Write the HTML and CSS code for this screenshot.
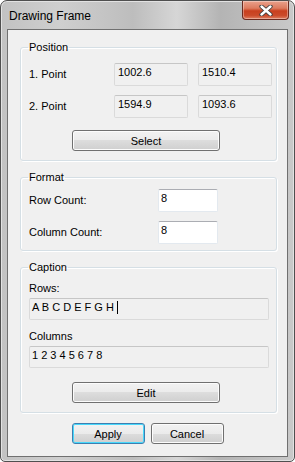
FILE: index.html
```html
<!DOCTYPE html>
<html lang="en">
<head>
    <meta charset="UTF-8">
    <meta name="viewport" content="width=device-width, initial-scale=1.0">
    <title>Drawing Frame</title>
    <link rel="stylesheet" href="styles.css">
</head>
<body>
    <div class="window">
        <!-- 标题栏 -->
        <div class="titlebar">
            <span class="title">Drawing Frame</span>
            <button class="close" aria-label="Close">
                <svg width="14" height="11" viewBox="0 0 14 11">
                    <path d="M2.5 1.5 L11.5 9.5 M11.5 1.5 L2.5 9.5" stroke="#3b3b3b" stroke-width="4.2" stroke-linecap="round" fill="none"/>
                    <path d="M2.5 1.5 L11.5 9.5 M11.5 1.5 L2.5 9.5" stroke="#ffffff" stroke-width="2.4" stroke-linecap="round" fill="none"/>
                </svg>
            </button>
        </div>

        <div class="client">
            <fieldset class="group group-position">
                <legend>Position</legend>
                <div class="point-row">
                    <span class="label">1. Point</span>
                    <div class="field">1002.6</div>
                    <div class="field">1510.4</div>
                </div>
                <div class="point-row">
                    <span class="label">2. Point</span>
                    <div class="field">1594.9</div>
                    <div class="field">1093.6</div>
                </div>
                <button class="btn btn-wide">Select</button>
            </fieldset>

            <fieldset class="group group-format">
                <legend>Format</legend>
                <div class="count-row">
                    <span class="label">Row Count:</span>
                    <div class="field field-edit">8</div>
                </div>
                <div class="count-row">
                    <span class="label">Column Count:</span>
                    <div class="field field-edit">8</div>
                </div>
            </fieldset>

            <fieldset class="group group-caption">
                <legend>Caption</legend>
                <div class="caption-label">Rows:</div>
                <div class="field field-long">A B C D E F G H <span class="caret"></span></div>
                <div class="caption-label caption-label-second">Columns</div>
                <div class="field field-long">1 2 3 4 5 6 7 8</div>
                <button class="btn btn-wide btn-edit">Edit</button>
            </fieldset>

            <!-- 对话框按钮 -->
            <div class="dialog-buttons">
                <button class="btn btn-default">Apply</button>
                <button class="btn">Cancel</button>
            </div>
        </div>
    </div>
</body>
</html>
```

FILE: styles.css
```css
body {
    margin: 0;
    font-family: 'Liberation Sans', Arial, sans-serif;
    font-size: 11px;
    color: #000;
    background: #fff;
}

.window {
    box-sizing: border-box;
    width: 295px;
    height: 462px;
    display: flex;
    flex-direction: column;
    border: 1px solid #4f4f4f;
    border-radius: 7px 7px 5px 5px;
    background: linear-gradient(to right, #c2c2c2 0%, #cfcfcf 20%, #bdbdbd 45%, #d6d6d6 60%, #b4b4b4 75%, #c9c9c9 100%);
    box-shadow: inset 0 0 0 1px #e2e2e2;
    overflow: hidden;
}

/* 标题栏 */
.titlebar {
    height: 28px;
    flex: none;
    display: flex;
    align-items: flex-start;
    padding-left: 8px;
}

.title {
    font-size: 12px;
    line-height: 14px;
    margin-top: 8px;
    color: #000;
}

.close {
    margin-left: auto;
    margin-right: 5px;
    width: 47px;
    height: 19px;
    padding: 0;
    display: flex;
    align-items: center;
    justify-content: center;
    border: 1px solid #6b2b20;
    border-top: none;
    border-radius: 0 0 4px 4px;
    background: linear-gradient(#e9a18c 0%, #dd7b5f 40%, #c9401f 55%, #cb4a2a 80%, #df8062 100%);
    box-shadow: inset 0 0 0 1px rgba(255, 255, 255, 0.35);
}

.close svg {
    display: block;
}

/* 客户区 */
.client {
    flex: 1;
    margin: 0 6px 4px;
    padding-top: 11px;
    border: 1px solid #707070;
    background: #f0f0f0;
}

.group {
    margin: 0 10px 0 12px;
    padding: 9px 8px 9px 8px;
    border: 1px solid #d5dfe5;
    border-radius: 3px;
    box-shadow: inset 1px 1px 0 #fff, 1px 1px 0 #fff;
    min-inline-size: 0;
}

.group legend {
    padding: 0 1px;
    margin-left: -1px;
    line-height: 13px;
    font-size: 11px;
}

.group-format {
    margin-top: 10px;
    padding-top: 5px;
    padding-bottom: 6px;
}

.group-caption {
    margin-top: 10px;
    padding-top: 8px;
}

.label {
    line-height: 13px;
    flex: none;
}

.field {
    box-sizing: border-box;
    flex: none;
    height: 23px;
    padding: 2px 3px 0;
    line-height: 13px;
    border: 1px solid #dadada;
    border-top-color: #c6c6c6;
    border-radius: 2px;
    background: #f0f0f0;
    white-space: nowrap;
}

.field-edit {
    width: 60px;
    padding-left: 2px;
    background: #fff;
    border-color: #e3e9ef;
    border-top-color: #abadb3;
}

.field-long {
    width: 240px;
    height: 22px;
    padding-left: 2px;
    margin-top: 3px;
}

.caret {
    display: inline-block;
    width: 1px;
    height: 13px;
    background: #000;
    vertical-align: top;
}

.point-row {
    display: flex;
    align-items: center;
    gap: 10px;
}

.point-row + .point-row {
    margin-top: 9px;
}

.point-row .label {
    width: 75px;
}

.point-row .field {
    width: 74px;
}

.count-row {
    display: flex;
    align-items: center;
}

.count-row + .count-row {
    margin-top: 9px;
}

.count-row .label {
    width: 129px;
}

.caption-label {
    line-height: 13px;
}

.caption-label-second {
    margin-top: 10px;
}

/* 按钮 */
.btn {
    box-sizing: border-box;
    height: 21px;
    padding: 0;
    font-family: 'Liberation Sans', Arial, sans-serif;
    font-size: 11px;
    color: #000;
    border: 1px solid #707070;
    border-radius: 3px;
    background: linear-gradient(#f2f2f2 0%, #ebebeb 50%, #dddddd 50%, #cfcfcf 100%);
    box-shadow: inset 0 0 0 1px #fcfcfc;
}

.btn-wide {
    display: block;
    width: 148px;
    margin: 12px 0 0 43px;
}

.btn-edit {
    margin-top: 14px;
}

.dialog-buttons {
    display: flex;
    justify-content: center;
    gap: 6px;
    margin-top: 10px;
}

.dialog-buttons .btn {
    width: 73px;
}

.btn-default {
    border-color: #3c7fb1;
    box-shadow: inset 0 0 0 1px #48d8fb;
}
```
